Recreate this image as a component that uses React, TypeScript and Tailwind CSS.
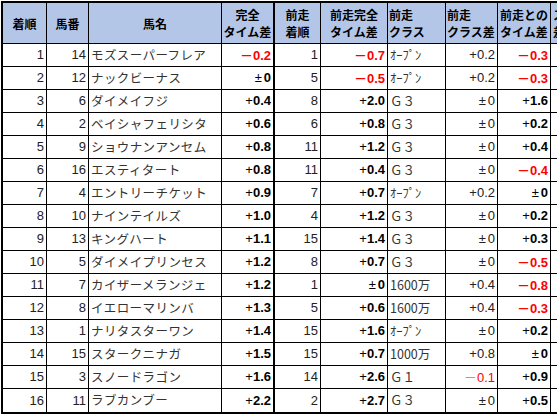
import React from "react";

type Row = [number, number, string, string, number, string, string, string, string];

const rows: Row[] = [
  [1, 14, "モズスーパーフレア", "-0.2", 1, "-0.7", "ｵｰﾌﾟﾝ", "+0.2", "-0.3"],
  [2, 12, "ナックビーナス", "±0", 5, "-0.5", "ｵｰﾌﾟﾝ", "+0.2", "-0.3"],
  [3, 6, "ダイメイフジ", "+0.4", 8, "+2.0", "Ｇ３", "±0", "+1.6"],
  [4, 2, "ベイシャフェリシタ", "+0.6", 6, "+0.8", "Ｇ３", "±0", "+0.2"],
  [5, 9, "ショウナンアンセム", "+0.8", 11, "+1.2", "Ｇ３", "±0", "+0.4"],
  [6, 16, "エスティタート", "+0.8", 11, "+0.4", "Ｇ３", "±0", "-0.4"],
  [7, 4, "エントリーチケット", "+0.9", 7, "+0.7", "ｵｰﾌﾟﾝ", "+0.2", "±0"],
  [8, 10, "ナインテイルズ", "+1.0", 4, "+1.2", "Ｇ３", "±0", "+0.2"],
  [9, 13, "キングハート", "+1.1", 15, "+1.4", "Ｇ３", "±0", "+0.3"],
  [10, 5, "ダイメイプリンセス", "+1.2", 8, "+0.7", "Ｇ３", "±0", "-0.5"],
  [11, 7, "カイザーメランジェ", "+1.2", 1, "±0", "1600万", "+0.4", "-0.8"],
  [12, 8, "イエローマリンバ", "+1.3", 5, "+0.6", "1600万", "+0.4", "-0.3"],
  [13, 1, "ナリタスターワン", "+1.4", 15, "+1.6", "ｵｰﾌﾟﾝ", "±0", "+0.2"],
  [14, 15, "スタークニナガ", "+1.5", 15, "+0.7", "1000万", "+0.8", "±0"],
  [15, 3, "スノードラゴン", "+1.6", 14, "+2.6", "Ｇ１", "-0.1", "+0.9"],
  [16, 11, "ラブカンブー", "+2.2", 2, "+2.7", "Ｇ３", "±0", "+0.5"],
];

const grid =
  "grid grid-cols-[44px_42px_133px_53px_46px_67px_58px_52px_53px_60px]";
const jp = "font-['Noto_Sans_CJK_JP',sans-serif]";
const num = "font-['Liberation_Sans','Noto_Sans_CJK_JP',sans-serif]";

const Val = ({ v, bold }: { v: string; bold: boolean }) => {
  const w = bold ? "font-bold" : "font-normal";
  if (v.startsWith("-")) {
    return (
      <span className={`text-[#ff0000] ${w}`}>
        <span className={`${jp} ${bold ? "font-bold" : "font-light"}`}>－</span>
        {v.slice(1)}
      </span>
    );
  }
  if (v.startsWith("±")) {
    return (
      <span>
        <span className="mr-[2px] font-normal">±</span>
        <span className={w}>{v.slice(1)}</span>
      </span>
    );
  }
  return (
    <span>
      <span className="font-normal">+</span>
      <span className={w}>{v.slice(1)}</span>
    </span>
  );
};

const HeadCell = ({
  top,
  bottom,
  align = "center",
  thick = false,
}: {
  top: string;
  bottom?: string;
  align?: "center" | "left";
  thick?: boolean;
}) => (
  <div
    className={`flex flex-col justify-center whitespace-nowrap ${
      align === "center" ? "items-center" : "items-start pl-[1px]"
    } ${thick ? "border-r-2" : "border-r"} border-black leading-[17px]`}
  >
    <span>{top}</span>
    {bottom && <span>{bottom}</span>}
  </div>
);

export default function App() {
  return (
    <div className="w-[557px] h-[415px] overflow-hidden bg-white">
      <div className="ml-[1px] mt-[1px] w-max border-2 border-black text-black">
        <div
          className={`${grid} h-[41px] bg-[#b4c6e7] border-b border-black text-[12px] font-bold ${jp}`}
        >
          <HeadCell top="着順" />
          <HeadCell top="馬番" />
          <HeadCell top="馬名" />
          <HeadCell top="完全" bottom="タイム差" thick />
          <HeadCell top="前走" bottom="着順" />
          <HeadCell top="前走完全" bottom="タイム差" />
          <HeadCell top="前走" bottom="クラス" align="left" />
          <HeadCell top="前走" bottom="クラス差" align="left" />
          <HeadCell top="前走との" bottom="タイム差" />
          <div className="flex flex-col justify-center whitespace-nowrap pl-[2px] leading-[17px]">
            <span>スピ</span>
            <span>差</span>
          </div>
        </div>
        {rows.map((r, i) => (
          <div
            key={r[0]}
            className={`${grid} h-[23px] ${
              i < rows.length - 1 ? "border-b border-black" : ""
            } text-[13px] ${num}`}
          >
            <div className="flex items-center justify-end pr-[2px] border-r border-black text-[#222]">
              {r[0]}
            </div>
            <div className="flex items-center justify-end pr-[2px] border-r border-black text-[#222]">
              {r[1]}
            </div>
            <div
              className={`flex items-center whitespace-nowrap pl-[2px] border-r border-black text-[12.5px] tracking-[0.4px] text-[#333] ${jp}`}
            >
              {r[2]}
            </div>
            <div className="flex items-center justify-end pr-[2px] border-r-2 border-black">
              <Val v={r[3]} bold />
            </div>
            <div className="flex items-center justify-end pr-[2px] border-r border-black text-[#222]">
              {r[4]}
            </div>
            <div className="flex items-center justify-end pr-[2px] border-r border-black">
              <Val v={r[5]} bold />
            </div>
            <div
              className={`flex items-center whitespace-nowrap pl-[2px] border-r border-black text-[12.5px] text-[#333] ${jp}`}
            >
              {r[6]}
            </div>
            <div className="flex items-center justify-end pr-[2px] border-r border-black text-[#222]">
              <Val v={r[7]} bold={false} />
            </div>
            <div className="flex items-center justify-end pr-[2px] border-r border-black">
              <Val v={r[8]} bold />
            </div>
            <div />
          </div>
        ))}
      </div>
    </div>
  );
}
